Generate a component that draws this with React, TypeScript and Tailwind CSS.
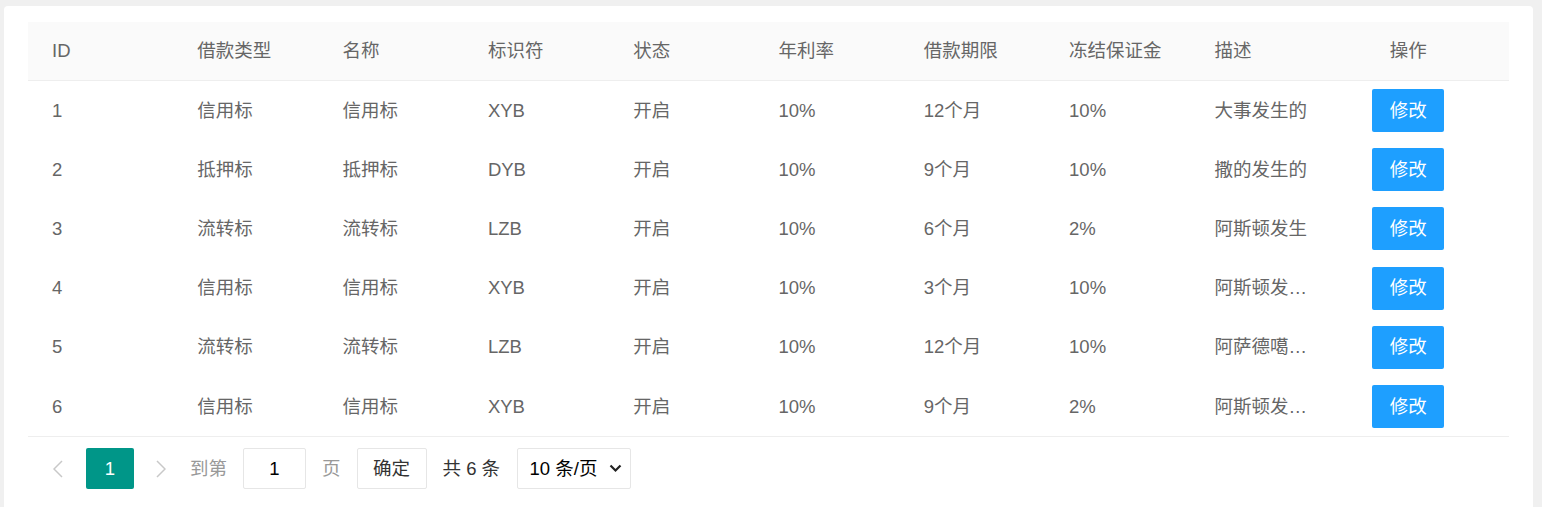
import React from 'react';

interface Loan {
  id: number;
  type: string;
  name: string;
  code: string;
  status: string;
  rate: string;
  term: string;
  deposit: string;
  desc: string;
}

const rows: Loan[] = [
  { id: 1, type: '信用标', name: '信用标', code: 'XYB', status: '开启', rate: '10%', term: '12个月', deposit: '10%', desc: '大事发生的' },
  { id: 2, type: '抵押标', name: '抵押标', code: 'DYB', status: '开启', rate: '10%', term: '9个月', deposit: '10%', desc: '撒的发生的' },
  { id: 3, type: '流转标', name: '流转标', code: 'LZB', status: '开启', rate: '10%', term: '6个月', deposit: '2%', desc: '阿斯顿发生' },
  { id: 4, type: '信用标', name: '信用标', code: 'XYB', status: '开启', rate: '10%', term: '3个月', deposit: '10%', desc: '阿斯顿发生大事' },
  { id: 5, type: '流转标', name: '流转标', code: 'LZB', status: '开启', rate: '10%', term: '12个月', deposit: '10%', desc: '阿萨德噶说的话' },
  { id: 6, type: '信用标', name: '信用标', code: 'XYB', status: '开启', rate: '10%', term: '9个月', deposit: '2%', desc: '阿斯顿发生的' },
];

const headers = ['ID', '借款类型', '名称', '标识符', '状态', '年利率', '借款期限', '冻结保证金', '描述'];

const gridCols = 'grid grid-cols-[repeat(10,145.3px)_1fr]';

const App: React.FC = () => {
  return (
    <div
      className="min-h-screen bg-[#f0f0f0] pt-[6px] pl-[4px] pr-[9px]"
      style={{ fontFamily: '"Liberation Sans", "Noto Sans CJK SC", sans-serif' }}
    >
      <div className="bg-white rounded-[4px] px-[24px] pt-[16px] pb-[30px]">
        {/* header */}
        <div className={`${gridCols} h-[59px] bg-[#fafafa] border-b border-[#eeeeee] text-[#666] text-[18.5px]`}>
          {headers.map((h) => (
            <div key={h} className="flex items-center px-[24px] whitespace-nowrap">
              {h}
            </div>
          ))}
          <div className="flex items-center justify-center">操作</div>
          <div />
        </div>

        {/* rows */}
        <div className="border-b border-[#eeeeee]">
          {rows.map((r) => (
            <div key={r.id} className={`${gridCols} h-[59.2px] text-[#666] text-[18.5px]`}>
              {[r.id, r.type, r.name, r.code, r.status, r.rate, r.term, r.deposit].map((v, i) => (
                <div key={i} className="flex items-center px-[24px] whitespace-nowrap">
                  {v}
                </div>
              ))}
              <div className="flex items-center px-[24px] min-w-0">
                <span className="truncate">{r.desc}</span>
              </div>
              <div className="flex items-center justify-center">
                <button className="w-[72px] h-[43px] bg-[#1e9fff] text-white text-[18.5px] rounded-[2px]">修改</button>
              </div>
              <div />
            </div>
          ))}
        </div>

        {/* pagination */}
        <div className="flex items-center pt-[11px] pl-[20px] text-[18.5px]">
          <div className="w-[20px] h-[41px] flex items-center justify-center">
            <svg width="10" height="18" viewBox="0 0 10 18" fill="none">
              <polyline points="9,1 1,9 9,17" stroke="#c8c8c8" strokeWidth="1.5" />
            </svg>
          </div>
          <div className="ml-[18px] w-[48px] h-[41px] rounded-[2px] bg-[#009688] text-white flex items-center justify-center">1</div>
          <div className="ml-[17px] w-[20px] h-[41px] flex items-center justify-center">
            <svg width="10" height="18" viewBox="0 0 10 18" fill="none">
              <polyline points="1,1 9,9 1,17" stroke="#c8c8c8" strokeWidth="1.5" />
            </svg>
          </div>
          <span className="ml-[19px] text-[#999]">到第</span>
          <div className="ml-[16px] w-[63px] h-[41px] border border-[#e6e6e6] rounded-[2px] flex items-center justify-center text-black">1</div>
          <span className="ml-[16px] text-[#999]">页</span>
          <button className="ml-[16px] w-[70px] h-[41px] border border-[#e6e6e6] rounded-[2px] text-[#333]">确定</button>
          <span className="ml-[16px] w-[59px] text-[#333] whitespace-nowrap">共 6 条</span>
          <div className="ml-[15px] w-[114px] h-[41px] border border-[#e6e6e6] rounded-[2px] flex items-center pl-[12px] pr-[8px] text-black">
            <span className="flex-1 whitespace-nowrap">10 条/页</span>
            <svg width="13" height="9" viewBox="0 0 13 9" fill="none">
              <polyline points="1.5,1.5 6.5,6.5 11.5,1.5" stroke="#222" strokeWidth="2.2" />
            </svg>
          </div>
        </div>
      </div>
    </div>
  );
};

export default App;
